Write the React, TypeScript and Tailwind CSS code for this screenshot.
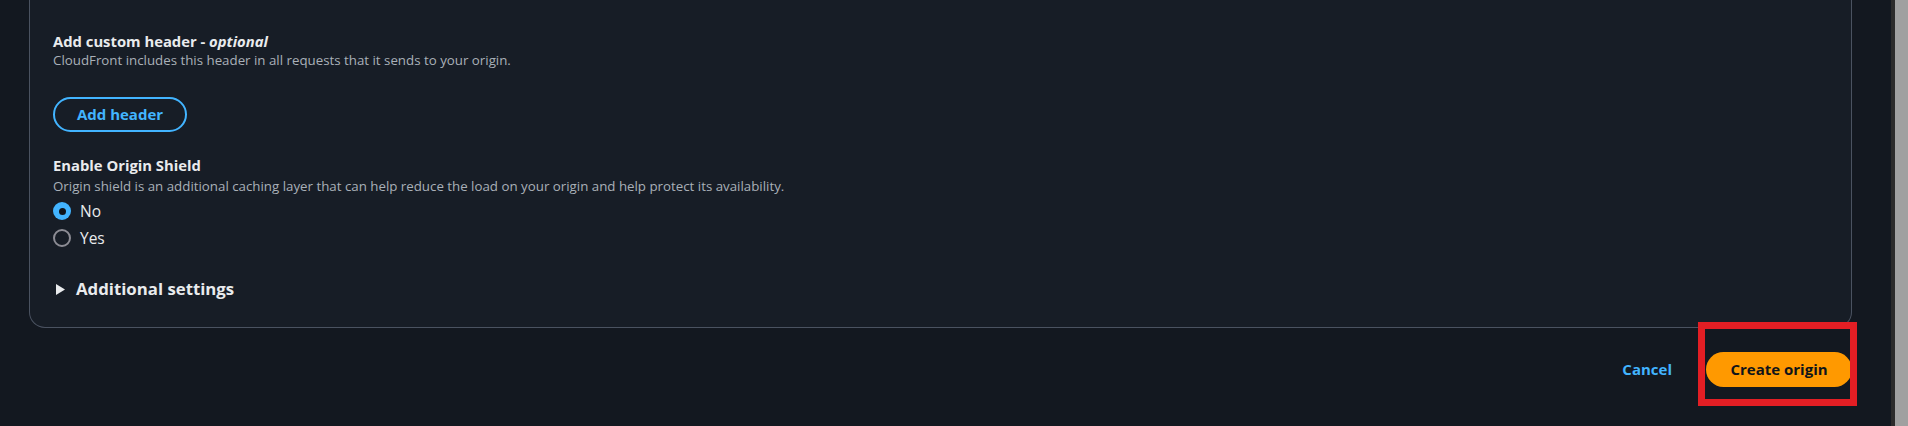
import React from 'react';

const font = { fontFamily: '"Open Sans", "Noto Sans", sans-serif' };

const Radio: React.FC<{ label: string; checked?: boolean }> = ({ label, checked }) => (
  <label className="flex items-center h-[22px] gap-[9px] cursor-pointer">
    {checked ? (
      <span className="w-[18px] h-[18px] rounded-full bg-[#42b4ff] grid place-items-center">
        <span className="w-[7px] h-[7px] rounded-full bg-[#0f141a]" />
      </span>
    ) : (
      <span className="w-[18px] h-[18px] rounded-full border-2 border-[#8c8c94]" />
    )}
    <span className="text-[15.5px] leading-[22px] text-[#e9ebed]">{label}</span>
  </label>
);

export default function App() {
  return (
    <div className="flex w-full h-[426px] bg-[#131820] overflow-hidden" style={font}>
      <main className="flex-1 pl-[29px] pr-[39px]">
        <section className="border-x border-b border-[#4a5260] rounded-b-[16px] bg-[#171d26] pl-[23px] pt-[31px] pb-[26px]">
          <h3 className="text-[14.8px] leading-[20px] font-bold text-[#e9ebed]">
            Add custom header - <i className="font-bold">optional</i>
          </h3>
          <p className="text-[13.3px] leading-[18px] text-[#a9b0b8]">
            CloudFront includes this header in all requests that it sends to your origin.
          </p>
          <button className="mt-[28px] h-[35px] w-[134px] rounded-full border-2 border-[#42b4ff] text-[#42b4ff] text-[15px] font-bold">
            Add header
          </button>

          <h3 className="mt-[23px] text-[14.8px] leading-[20px] font-bold text-[#e9ebed]">Enable Origin Shield</h3>
          <p className="mt-[2px] text-[13.3px] leading-[18px] text-[#a9b0b8]">
            Origin shield is an additional caching layer that can help reduce the load on your origin and help protect its availability.
          </p>
          <div className="mt-[5px] flex flex-col gap-[5px]">
            <Radio label="No" checked />
            <Radio label="Yes" />
          </div>

          <button className="mt-[28px] flex items-center h-[24px] gap-[11px] pl-[3px] text-[#e9ebed]">
            <svg width="9" height="11" viewBox="0 0 9 11">
              <path d="M0 0 L9 5.5 L0 11 Z" fill="#e9ebed" />
            </svg>
            <span className="text-[16.8px] leading-[24px] font-bold">Additional settings</span>
          </button>
        </section>

        <div className="mt-[24px] flex justify-end items-center gap-[34px]">
          <button className="text-[15px] font-bold text-[#42b4ff]">Cancel</button>
          <div className="relative">
            <button className="h-[35px] w-[146px] rounded-full bg-[#ff9900] text-[15px] font-bold text-[#0f141a]">
              Create origin
            </button>
            <span className="absolute left-[-8px] top-[-30px] right-[-5px] bottom-[-19px] border-[7px] border-[#e31e24] pointer-events-none" />
          </div>
        </div>
      </main>
      <div className="flex w-[17px] h-full">
        <div className="w-[4px] bg-[#2b2b2b]" />
        <div className="flex-1 bg-[#a0a0a0]" />
      </div>
    </div>
  );
}
